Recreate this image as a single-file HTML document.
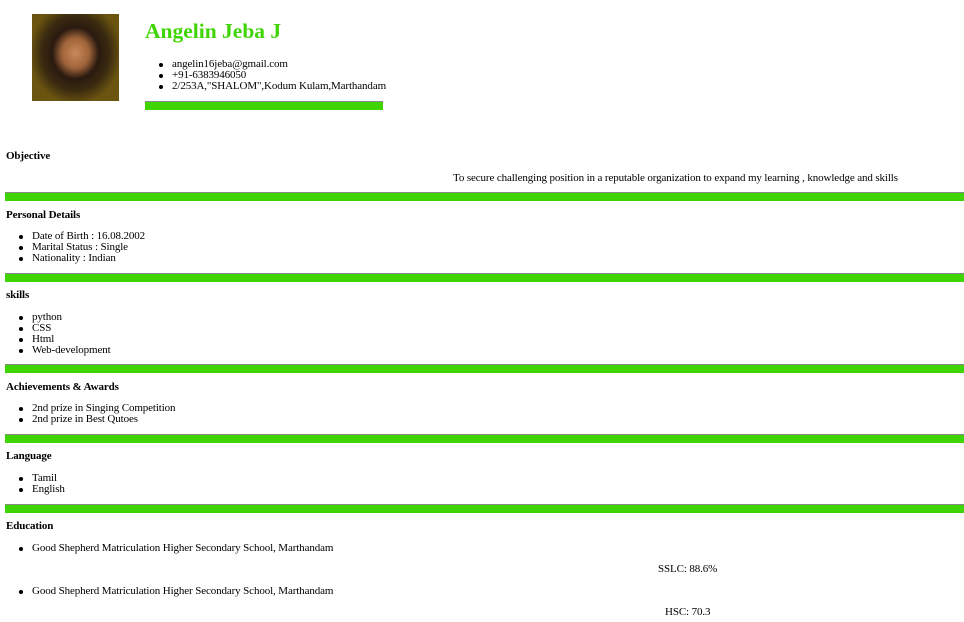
<!DOCTYPE html>
<html><head><style>
body{margin:0;width:964px;height:622px;position:relative;background:#fff;font-family:"Liberation Serif",serif;font-size:11px;letter-spacing:-0.12px;color:#000;overflow:hidden}
.a{position:absolute;white-space:nowrap;line-height:11px}
.b{font-weight:bold}
.bar{position:absolute;background:#3fd504;border-top:1px solid #888;height:8px}
.li:before{content:"";position:absolute;left:-13px;top:4px;width:4px;height:4px;border-radius:50%;background:#000}
</style></head><body>
<div style="position:absolute;left:32px;top:14px;width:87px;height:87px;background:radial-gradient(ellipse at 50% 45%,#c98a5a 0,#a0643a 22%,#2a1a10 38%,#3a2a10 55%,#6a5410 75%);"></div>
<div class="a b" style="left:145px;top:19px;font-size:21.5px;line-height:24px;color:#3fd504;letter-spacing:0">Angelin Jeba J</div>
<div class="a li" style="left:172px;top:59px">angelin16jeba@gmail.com</div>
<div class="a li" style="left:172px;top:70px">+91-6383946050</div>
<div class="a li" style="left:172px;top:81px">2/253A,"SHALOM",Kodum Kulam,Marthandam</div>
<div class="bar" style="left:145px;top:101px;width:238px"></div>
<div class="a b" style="left:6px;top:151px">Objective</div>
<div class="a" style="left:453px;top:173px">To secure challenging position in a reputable organization to expand my learning , knowledge and skills</div>
<div class="bar" style="left:5px;top:192px;width:959px"></div>
<div class="a b" style="left:6px;top:210px">Personal Details</div>
<div class="a li" style="left:32px;top:231px">Date of Birth : 16.08.2002</div>
<div class="a li" style="left:32px;top:242px">Marital Status : Single</div>
<div class="a li" style="left:32px;top:253px">Nationality : Indian</div>
<div class="bar" style="left:5px;top:273px;width:959px"></div>
<div class="a b" style="left:6px;top:290px">skills</div>
<div class="a li" style="left:32px;top:312px">python</div>
<div class="a li" style="left:32px;top:323px">CSS</div>
<div class="a li" style="left:32px;top:334px">Html</div>
<div class="a li" style="left:32px;top:345px">Web-development</div>
<div class="bar" style="left:5px;top:364px;width:959px"></div>
<div class="a b" style="left:6px;top:382px">Achievements &amp; Awards</div>
<div class="a li" style="left:32px;top:403px">2nd prize in Singing Competition</div>
<div class="a li" style="left:32px;top:414px">2nd prize in Best Qutoes</div>
<div class="bar" style="left:5px;top:434px;width:959px"></div>
<div class="a b" style="left:6px;top:451px">Language</div>
<div class="a li" style="left:32px;top:473px">Tamil</div>
<div class="a li" style="left:32px;top:484px">English</div>
<div class="bar" style="left:5px;top:504px;width:959px"></div>
<div class="a b" style="left:6px;top:521px">Education</div>
<div class="a li" style="left:32px;top:543px">Good Shepherd Matriculation Higher Secondary School, Marthandam</div>
<div class="a" style="left:658px;top:564px">SSLC: 88.6%</div>
<div class="a li" style="left:32px;top:586px">Good Shepherd Matriculation Higher Secondary School, Marthandam</div>
<div class="a" style="left:665px;top:607px">HSC: 70.3</div>
</body></html>
